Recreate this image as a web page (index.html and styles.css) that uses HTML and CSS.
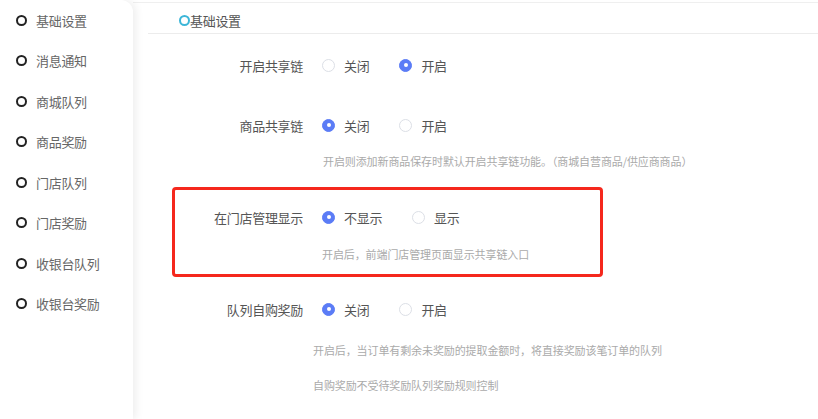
FILE: index.html
```html
<!DOCTYPE html>
<html lang="zh-CN">
<head>
<meta charset="utf-8">
<title>基础设置</title>
<link rel="stylesheet" href="styles.css">
</head>
<body>
<div class="page">
  <aside class="sidebar">
    <div class="nav-item"><span class="dot"></span>基础设置</div>
    <div class="nav-item"><span class="dot"></span>消息通知</div>
    <div class="nav-item"><span class="dot"></span>商城队列</div>
    <div class="nav-item"><span class="dot"></span>商品奖励</div>
    <div class="nav-item"><span class="dot"></span>门店队列</div>
    <div class="nav-item"><span class="dot"></span>门店奖励</div>
    <div class="nav-item"><span class="dot"></span>收银台队列</div>
    <div class="nav-item"><span class="dot"></span>收银台奖励</div>
  </aside>
  <main class="main">
    <div class="header"><span class="title-dot"></span>基础设置</div>
    <div class="form">
      <div class="row r1">
        <div class="label">开启共享链</div>
        <div class="radios">
          <span class="opt"><span class="radio"></span>关闭</span>
          <span class="opt"><span class="radio on"></span>开启</span>
        </div>
      </div>
      <div class="row r2">
        <div class="label">商品共享链</div>
        <div class="radios">
          <span class="opt"><span class="radio on"></span>关闭</span>
          <span class="opt"><span class="radio"></span>开启</span>
        </div>
      </div>
      <div class="help h2">开启则添加新商品保存时默认开启共享链功能。（商城自营商品/供应商商品）</div>
      <div class="row r3">
        <div class="label">在门店管理显示</div>
        <div class="radios">
          <span class="opt"><span class="radio on"></span>不显示</span>
          <span class="opt"><span class="radio"></span>显示</span>
        </div>
      </div>
      <div class="help h3">开启后，前端门店管理页面显示共享链入口</div>
      <div class="row r4">
        <div class="label">队列自购奖励</div>
        <div class="radios">
          <span class="opt"><span class="radio on"></span>关闭</span>
          <span class="opt"><span class="radio"></span>开启</span>
        </div>
      </div>
      <div class="help h4a">开启后，当订单有剩余未奖励的提取金额时，将直接奖励该笔订单的队列</div>
      <div class="help h4b">自购奖励不受待奖励队列奖励规则控制</div>
    </div>
  </main>
</div>
<div class="highlight"></div>
</body>
</html>
```

FILE: styles.css
```css
html, body {
  margin: 0;
  padding: 0;
  background: #fff;
  font-family: "Noto Sans CJK SC", "Microsoft YaHei", sans-serif;
  overflow: hidden;
}
.page {
  display: flex;
  width: 818px;
  height: 419px;
}
.sidebar {
  width: 133px;
  flex: none;
  background: #fff;
  border-top-right-radius: 12px;
  box-shadow: 3px 0 8px rgba(0, 0, 0, 0.07);
  position: relative;
  z-index: 1;
}
.nav-item {
  height: 40.5px;
  display: flex;
  align-items: center;
  padding-left: 16px;
  font-size: 13px;
  color: #666;
  letter-spacing: -0.3px;
}
.dot {
  width: 11px;
  height: 11px;
  box-sizing: border-box;
  border: 2px solid #222;
  border-radius: 50%;
  margin-right: 9px;
}
.main {
  flex: 1;
  margin-top: 2px;
  border-top: 1px solid #efefef;
}
.header {
  margin-left: 15px;
  height: 31px;
  box-sizing: border-box;
  padding-top: 5px;
  padding-left: 31px;
  line-height: 26px;
  border-bottom: 1px solid #ececec;
  font-size: 13px;
  color: #555;
  display: flex;
  align-items: center;
  letter-spacing: -0.3px;
}
.title-dot {
  width: 11px;
  height: 11px;
  box-sizing: border-box;
  border: 2px solid #3cb6d8;
  border-radius: 50%;
  margin-right: 0;
}
.form {
  padding-left: 15px;
}
.row {
  display: flex;
  align-items: center;
  height: 20px;
  font-size: 13px;
  color: #555;
}
.label {
  width: 155px;
  text-align: right;
  letter-spacing: -0.3px;
}
.radios {
  display: flex;
  margin-left: 19px;
}
.opt {
  display: flex;
  align-items: center;
  margin-right: 30px;
  color: #555;
  letter-spacing: -0.3px;
}
.radio {
  width: 13px;
  height: 13px;
  box-sizing: border-box;
  border: 1px solid #dcdfe6;
  border-radius: 50%;
  margin-right: 9px;
  background: #fff;
  position: relative;
}
.radio.on {
  background: #5b7cf6;
  border-color: #5b7cf6;
}
.radio.on::after {
  content: "";
  position: absolute;
  width: 4px;
  height: 4px;
  left: 3.5px;
  top: 3.5px;
  border-radius: 50%;
  background: #fff;
}
.help {
  font-size: 11px;
  line-height: 16px;
  height: 16px;
  color: #aaa;
  letter-spacing: -0.1px;
  white-space: pre;
}
.r1 { margin-top: 21px; }
.r2 { margin-top: 40px; }
.h2 { margin-top: 18px; padding-left: 175px; }
.r3 { margin-top: 38px; }
.h3 { margin-top: 19px; padding-left: 174px; }
.r4 { margin-top: 37px; }
.h4a { margin-top: 23px; padding-left: 165px; }
.h4b { margin-top: 19px; padding-left: 165px; }
.highlight {
  position: absolute;
  left: 172px;
  top: 187px;
  width: 431px;
  height: 90px;
  box-sizing: border-box;
  border: 3px solid #f5281d;
  border-radius: 4px;
  pointer-events: none;
}
```
